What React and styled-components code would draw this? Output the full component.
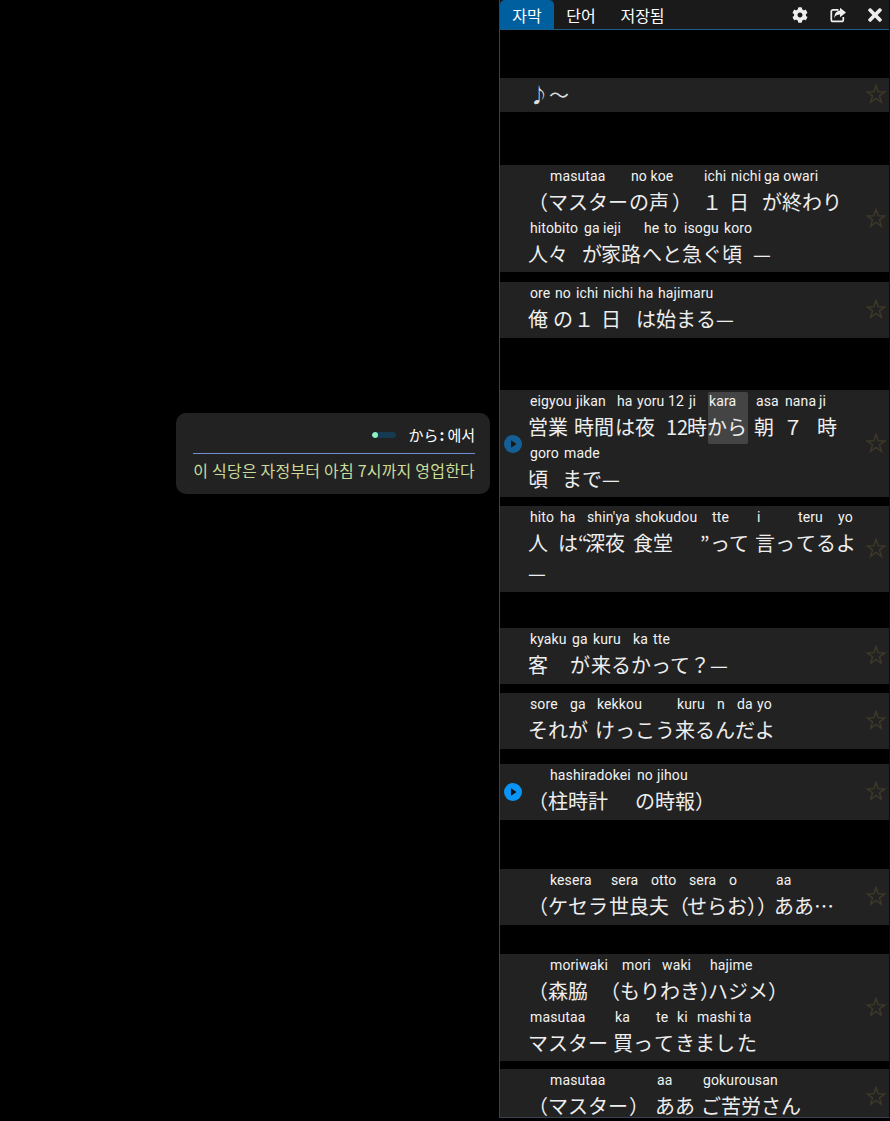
import React from "react";
import styled, { createGlobalStyle } from "styled-components";
import { FaCog, FaTimes } from "react-icons/fa";

const Global = createGlobalStyle`
  html, body { margin: 0; padding: 0; background: #000; height: 100%; overflow: hidden; }
  #root { height: 100%; }
`;

const JP = `"Noto Sans CJK JP", "Noto Sans CJK KR", sans-serif`;
const KR = `"Noto Sans CJK KR", "Noto Sans CJK JP", sans-serif`;

const Page = styled.div`
  position: relative;
  width: 890px;
  height: 1121px;
  background: #000;
  overflow: hidden;
`;
const Panel = styled.aside`
  position: absolute;
  left: 499px;
  top: 0;
  width: 391px;
  height: 1118px;
  box-sizing: border-box;
  border-left: 1px solid #3a4150;
  border-right: 1px solid #0c0c0c;
  border-bottom: 1px solid #3a4150;
  display: flex;
  flex-direction: column;
  overflow: hidden;
`;
const TabBar = styled.header`
  height: 30px;
  box-sizing: border-box;
  flex: none;
  background: #1a1a1a;
  border-bottom: 1px solid #1d5f8a;
  display: flex;
  align-items: stretch;
`;
const Tab = styled.div`
  width: ${(p) => p.$w}px;
  display: flex;
  align-items: center;
  justify-content: center;
  font: 16px ${KR};
  color: #fff;
  border-radius: 5px 5px 0 0;
  background: ${(p) => (p.$active ? "#005f9e" : "transparent")};
`;
const Tools = styled.div`
  margin-left: auto;
  display: flex;
  align-items: center;
  gap: 22px;
  padding-right: 4px;
  color: #eee;
  font-size: 16px;
`;
const ShareIcon = styled.svg`
  width: 16px;
  height: 16px;
`;
const CloseIcon = styled(FaTimes)`
  font-size: 20px;
  margin-left: -3px;
`;
const List = styled.div`
  flex: 1;
  overflow: hidden;
`;
const Row = styled.section`
  position: relative;
  box-sizing: border-box;
  height: ${(p) => p.$h}px;
  margin-top: ${(p) => p.$top}px;
  background: #222;
  padding: 2px 0 0 29px;
`;
const Line = styled.div`
  display: flex;
  height: ${(p) => (p.$bare ? 30 : 52)}px;
`;
const Word = styled.div`
  flex: none;
  width: ${(p) => p.$w}px;
  display: flex;
  flex-direction: column;
  border-radius: 2px;
  background: ${(p) => (p.$hl ? "#444" : "transparent")};
`;
const Ruby = styled.span`
  height: 22px;
  padding-left: 1px;
  font: 14px/19px Roboto, sans-serif;
  letter-spacing: 0.12px;
  color: #f2f2f2;
  white-space: nowrap;
`;
const Base = styled.span`
  margin-left: -1px;
  font: 20px/26px ${JP};
  color: #eee;
  white-space: nowrap;
  ${(p) => p.$half && `font-feature-settings: "halt"; letter-spacing: -2px;`}
`;
const Solo = styled.div`
  font: 20px/30px ${JP};
  color: #ddd;
`;
const StarWrap = styled.svg`
  position: absolute;
  right: 3px;
  top: 50%;
  margin-top: -11px;
  width: 20px;
  height: 20px;
`;
const PlayWrap = styled.svg`
  position: absolute;
  left: 4px;
  top: 50%;
  margin-top: -9px;
  width: 18px;
  height: 18px;
  opacity: ${(p) => (p.$dim ? 0.55 : 1)};
`;
const Popup = styled.div`
  position: absolute;
  left: 176px;
  top: 413px;
  width: 314px;
  height: 81px;
  box-sizing: border-box;
  padding: 10px 15px 0 17px;
  background: #222;
  border-radius: 10px;
`;
const PopHead = styled.div`
  display: flex;
  justify-content: flex-end;
  align-items: center;
  height: 31px;
  box-sizing: border-box;
  padding-bottom: 7px;
  border-bottom: 1px solid #6e8fd0;
  font: 15px ${JP};
  color: #fff;
`;
const Meter = styled.div`
  width: 24px;
  height: 6px;
  border-radius: 3px;
  background: #153a52;
  margin-right: 12px;
  overflow: hidden;
`;
const MeterFill = styled.div`
  height: 100%;
  background: #90f0c0;
  border-radius: 3px;
`;
const PopColon = styled.b`
  margin: 0 3px 0 1px;
`;
const PopText = styled.div`
  font: 16px/32px ${KR};
  letter-spacing: 0.2px;
  color: #c9dc9a;
  text-align: right;
  white-space: nowrap;
`;

const Star = () => (
  <StarWrap viewBox="0 0 20 20">
    <path d="M10 1.5l2.2 6.3 6.6.1-5.3 4 1.9 6.4-5.4-3.8-5.4 3.8 1.9-6.4-5.3-4 6.6-.1z" fill="none" stroke="#3d3828" strokeWidth="1.5" />
  </StarWrap>
);
const Play = ({ dim }) => (
  <PlayWrap $dim={dim} viewBox="0 0 18 18">
    <circle cx="9" cy="9" r="9" fill="#0a94f5" />
    <path d="M7 5.2l5.6 3.8-5.6 3.8z" fill="#111" />
  </PlayWrap>
);

const rows = [
  { top: 48, h: 34, solo: "♪～" },
  {
    top: 53, h: 107,
    lines: [
      [[20, "", "（"], [81, "masutaa", "マスター"], [43, "no koe", "の声"], [30, "", "）"], [27, "ichi", "１"], [33, "nichi", "日"], [80, "ga owari", "が終わり"]],
      [[54, "hitobito", "人々"], [19, "ga", "が"], [41, "ieji", "家路"], [20, "he", "へ"], [20, "to", "と"], [40, "isogu", "急ぐ"], [31, "koro", "頃"], [20, "", "—"]],
    ],
  },
  {
    top: 10, h: 56,
    lines: [
      [[25, "ore", "俺"], [21, "no", "の"], [27, "ichi", "１"], [35, "nichi", "日"], [20, "ha", "は"], [60, "hajimaru", "始まる"], [20, "", "—"]],
    ],
  },
  {
    top: 52, h: 107, play: "dim",
    lines: [
      [[46, "eigyou", "営業"], [41, "jikan", "時間"], [20, "ha", "は"], [31, "yoru", "夜"], [21, "12", "12"], [20, "ji", "時"], [40, "kara", "から", true], [7, "", ""], [29, "asa", "朝"], [34, "nana", "７"], [20, "ji", "時"]],
      [[34, "goro", "頃"], [40, "made", "まで"], [20, "", "—"]],
    ],
  },
  {
    top: 9, h: 86,
    lines: [
      [[30, "hito", "人"], [27, "ha", "は“"], [48, "shin'ya", "深夜"], [67, "shokudou", "食堂"], [10, "", "”"], [45, "tte", "って"], [41, "i", "言っ"], [40, "teru", "てる"], [20, "yo", "よ"]],
    ],
    bare: "—",
  },
  {
    top: 36, h: 56,
    lines: [
      [[42, "kyaku", "客"], [21, "ga", "が"], [40, "kuru", "来る"], [20, "ka", "か"], [80, "tte", "って？—"]],
    ],
  },
  {
    top: 9, h: 56,
    lines: [
      [[40, "sore", "それ"], [27, "ga", "が"], [80, "kekkou", "けっこう"], [40, "kuru", "来る"], [20, "n", "ん"], [20, "da", "だ"], [20, "yo", "よ"]],
    ],
  },
  {
    top: 15, h: 56, play: "on",
    lines: [
      [[20, "", "（"], [87, "hashiradokei", "柱時計"], [20, "no", "の"], [40, "jihou", "時報"], [20, "", "）"]],
    ],
  },
  {
    top: 49, h: 56,
    lines: [
      [[20, "", "（"], [61, "kesera", "ケセラ"], [40, "sera", "世良"], [38, "otto", "夫（"], [40, "sera", "せら"], [47, "o", "お））"], [60, "aa", "ああ…"]],
    ],
  },
  {
    top: 29, h: 107,
    lines: [
      [[20, "", "（"], [52, "moriwaki", "森脇"], [20, "", "（"], [40, "mori", "もり"], [40, "waki", "わき"], [8, "", "）", false, true], [60, "hajime", "ハジメ"], [20, "", "）"]],
      [[85, "masutaa", "マスター"], [41, "ka", "買っ"], [21, "te", "て"], [20, "ki", "き"], [42, "mashi", "まし"], [20, "ta", "た"]],
    ],
  },
  {
    top: 8, h: 56,
    lines: [
      [[20, "", "（"], [81, "masutaa", "マスター"], [26, "", "）"], [46, "aa", "ああ"], [100, "gokurousan", "ご苦労さん"]],
    ],
  },
];

export default function App() {
  return (
    <Page>
      <Global />
      <Popup>
        <PopHead>
          <Meter>
            <MeterFill style={{ width: "25%" }} />
          </Meter>
          から<PopColon>:</PopColon>에서
        </PopHead>
        <PopText>이 식당은 자정부터 아침 7시까지 영업한다</PopText>
      </Popup>
      <Panel>
        <TabBar>
          <Tab $active $w={54}>자막</Tab>
          <Tab $w={54}>단어</Tab>
          <Tab $w={69}>저장됨</Tab>
          <Tools>
            <FaCog />
            <ShareIcon viewBox="0 0 16 16">
              <path d="M8.5 2.8H3a1.7 1.7 0 0 0-1.7 1.7v8.2A1.7 1.7 0 0 0 3 14.4h8.6a1.7 1.7 0 0 0 1.7-1.7V10" fill="none" stroke="currentColor" strokeWidth="1.7" />
              <path d="M10 .8l6 4.7-6 4.7V7.6c-2.8 0-4.6.7-5.6 3.4C4.2 7 6.4 3.7 10 3.5z" fill="currentColor" />
            </ShareIcon>
            <CloseIcon />
          </Tools>
        </TabBar>
        <List>
          {rows.map((r, i) => (
            <Row key={i} $top={r.top} $h={r.h}>
              {r.play && <Play dim={r.play === "dim"} />}
              {r.solo && <Solo>{r.solo}</Solo>}
              {r.lines &&
                r.lines.map((words, j) => (
                  <Line key={j}>
                    {words.map(([w, ruby, base, hl, half], k) => (
                      <Word key={k} $w={w} $hl={hl}>
                        <Ruby>{ruby}</Ruby>
                        <Base $half={half}>{base}</Base>
                      </Word>
                    ))}
                  </Line>
                ))}
              {r.bare && (
                <Line $bare>
                  <Base>{r.bare}</Base>
                </Line>
              )}
              <Star />
            </Row>
          ))}
        </List>
      </Panel>
    </Page>
  );
}
